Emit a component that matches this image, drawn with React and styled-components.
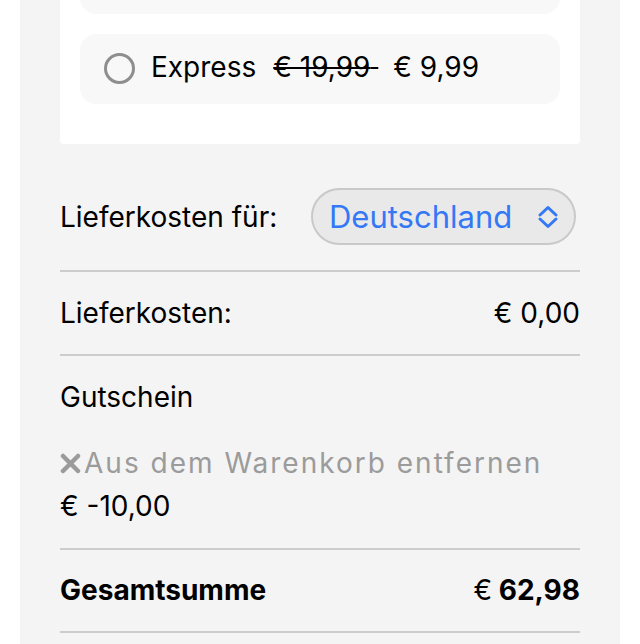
import React from "react";
import styled, { createGlobalStyle } from "styled-components";

const GlobalStyle = createGlobalStyle`
  body {
    margin: 0;
    background: #ffffff;
    font-family: Inter, "Noto Sans", sans-serif;
    color: #000;
    overflow: hidden;
  }
`;

const Panel = styled.div`
  margin: -96px 20px 0;
  padding: 20px 40px 0;
  background: #f4f4f4;
  min-height: 800px;
`;

const Card = styled.div`
  background: #fff;
  border-radius: 4px;
  padding: 20px 20px 40px;
  display: flex;
  flex-direction: column;
  gap: 20px;
`;

const Option = styled.label`
  display: flex;
  align-items: center;
  box-sizing: border-box;
  height: 70px;
  padding: 0 24px 4px;
  background: #f8f8f8;
  border-radius: 16px;
  font-size: 28px;
  line-height: 34px;
`;

const Radio = styled.span`
  width: 31px;
  height: 31px;
  border-radius: 50%;
  border: 3px solid #8e8e8e;
  box-sizing: border-box;
  flex: none;
  margin: 2px 16px 0 0;
`;

const OldPrice = styled.s`
  margin: 0 15px 0 17px;
  text-decoration-thickness: 2px;
`;

const Row = styled.div`
  display: flex;
  align-items: center;
  justify-content: space-between;
  font-size: 28px;
  line-height: 34px;
  padding: ${(p) => p.$pad || "24px 0"};
  border-bottom: 2px solid #cccccc;
`;

const Select = styled.div`
  display: flex;
  align-items: center;
  justify-content: space-between;
  width: 265px;
  height: 57px;
  box-sizing: border-box;
  padding: 0 15px 0 16px;
  border-radius: 29px;
  border: 2px solid #c9c9c9;
  background: #e9e9e9;
  color: #3478f6;
  font-size: 31px;
  margin-right: 4px;
`;

const Voucher = styled.div`
  display: flex;
  flex-direction: column;
  font-size: 28px;
  line-height: 34px;
  padding: 24px 0 25px;
  border-bottom: 2px solid #cccccc;
`;

const Remove = styled.div`
  display: flex;
  align-items: center;
  gap: 3px;
  color: #9b9b9b;
  letter-spacing: 2px;
  margin-top: 32px;
`;

const Amount = styled.div`
  margin-top: 9px;
`;

const Total = styled(Row)`
  font-weight: 700;
`;

const Euro = styled.span`
  font-weight: 400;
`;

const Chevrons = () => (
  <svg width="22" height="24" viewBox="0 0 22 24" fill="none" stroke="#3478f6" strokeWidth="3" strokeLinecap="round" strokeLinejoin="round">
    <polyline points="3,10 11,2.5 19,10" />
    <polyline points="3,14 11,21.5 19,14" />
  </svg>
);

const XIcon = () => (
  <svg width="21" height="21" viewBox="0 0 21 21" stroke="#9b9b9b" strokeWidth="4.5" strokeLinecap="round">
    <line x1="3" y1="3" x2="18" y2="18" />
    <line x1="18" y1="3" x2="3" y2="18" />
  </svg>
);

export default function App() {
  return (
    <>
      <GlobalStyle />
      <Panel>
        <Card>
          <Option>
            <Radio />
            Standard <OldPrice>€ 4,99</OldPrice>
          </Option>
          <Option>
            <Radio />
            Express <OldPrice>€ 19,99{"\u00a0"}</OldPrice>
            <span>€ 9,99</span>
          </Option>
        </Card>
        <Row $pad="44px 0 25px">
          <span>Lieferkosten für:</span>
          <Select>
            <span>Deutschland</span>
            <Chevrons />
          </Select>
        </Row>
        <Row>
          <span>Lieferkosten:</span>
          <span>€ 0,00</span>
        </Row>
        <Voucher>
          <span>Gutschein</span>
          <Remove>
            <XIcon />
            Aus dem Warenkorb entfernen
          </Remove>
          <Amount>€ -10,00</Amount>
        </Voucher>
        <Total $pad="23px 0 24px">
          <span>Gesamtsumme</span>
          <span>
            <Euro>€</Euro> 62,98
          </span>
        </Total>
      </Panel>
    </>
  );
}
